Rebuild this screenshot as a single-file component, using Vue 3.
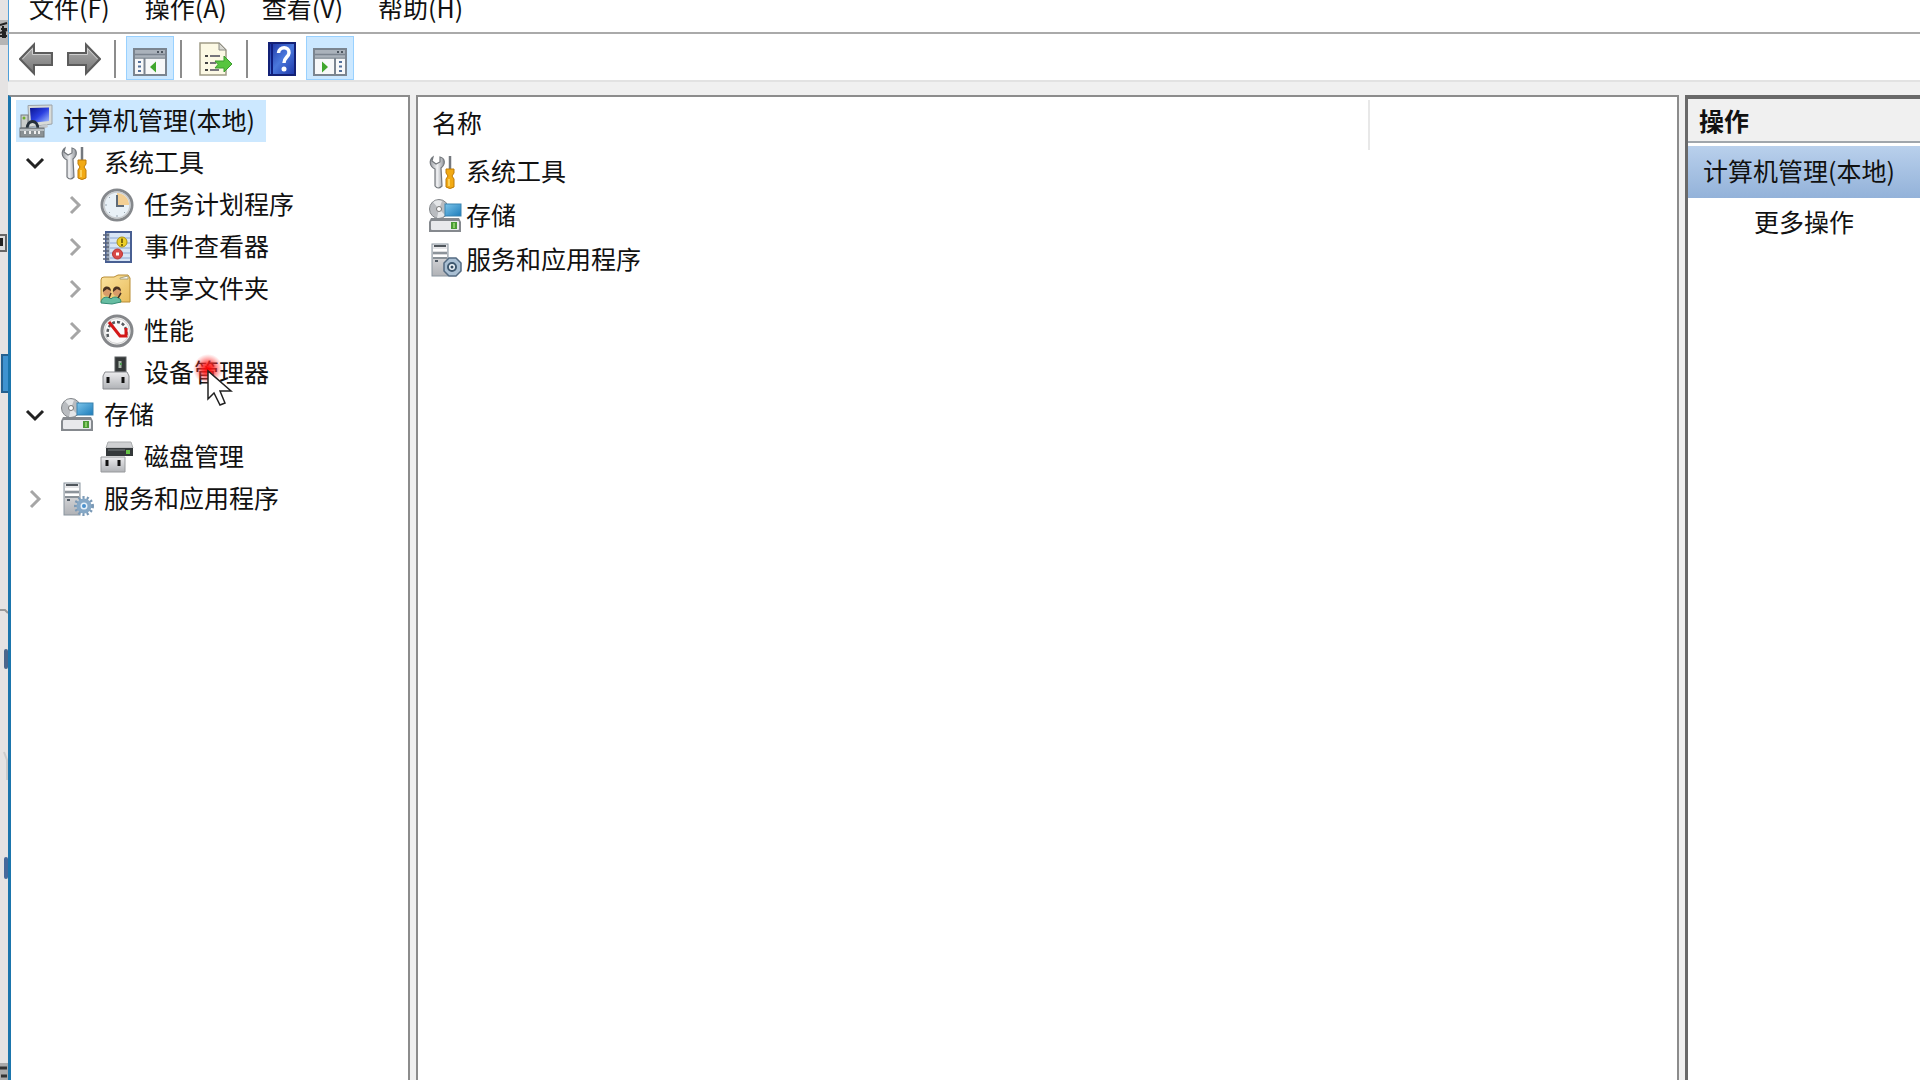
<script setup>
import { ref } from 'vue'

const menus = ['文件(F)', '操作(A)', '查看(V)', '帮助(H)']

const tree = [
  { label: '计算机管理(本地)', icon: 'computer', level: 0, state: 'none' },
  { label: '系统工具', icon: 'tools', level: 1, state: 'open' },
  { label: '任务计划程序', icon: 'clock', level: 2, state: 'closed' },
  { label: '事件查看器', icon: 'events', level: 2, state: 'closed' },
  { label: '共享文件夹', icon: 'shared', level: 2, state: 'closed' },
  { label: '性能', icon: 'gauge', level: 2, state: 'closed' },
  { label: '设备管理器', icon: 'device', level: 2, state: 'leaf', pointer: true },
  { label: '存储', icon: 'storage', level: 1, state: 'open' },
  { label: '磁盘管理', icon: 'disk', level: 2, state: 'leaf' },
  { label: '服务和应用程序', icon: 'services', level: 1, state: 'closed' }
]

const items = [
  { label: '系统工具', icon: 'tools' },
  { label: '存储', icon: 'storage' },
  { label: '服务和应用程序', icon: 'services-disc' }
]

const selected = ref(tree[0].label)
</script>

<template>
  <div class="desktop">
    <svg class="defs" aria-hidden="true">
      <defs>
        <linearGradient id="g-arrow" x1="0" y1="0" x2="0" y2="1">
          <stop offset="0" stop-color="#b0b0b0" />
          <stop offset="1" stop-color="#757575" />
        </linearGradient>
        <linearGradient id="g-help" x1="0" y1="0" x2="1" y2="1">
          <stop offset="0" stop-color="#1a2fa0" />
          <stop offset="0.5" stop-color="#4a78dc" />
          <stop offset="1" stop-color="#1c36a8" />
        </linearGradient>
        <linearGradient id="g-screen" x1="0" y1="0" x2="1" y2="1">
          <stop offset="0" stop-color="#0a1490" />
          <stop offset="0.5" stop-color="#2a3fe0" />
          <stop offset="1" stop-color="#a8c4ff" />
        </linearGradient>
        <linearGradient id="g-metal" x1="0" y1="0" x2="1" y2="0">
          <stop offset="0" stop-color="#9a9ea4" />
          <stop offset="0.5" stop-color="#f0f1f3" />
          <stop offset="1" stop-color="#8e9298" />
        </linearGradient>
        <linearGradient id="g-blue" x1="0" y1="0" x2="1" y2="1">
          <stop offset="0" stop-color="#7cc4ea" />
          <stop offset="1" stop-color="#1c7cba" />
        </linearGradient>
        <linearGradient id="g-box" x1="0" y1="0" x2="0" y2="1">
          <stop offset="0" stop-color="#ececee" />
          <stop offset="1" stop-color="#b0b2b6" />
        </linearGradient>
        <linearGradient id="g-folder" x1="0" y1="0" x2="1" y2="1">
          <stop offset="0" stop-color="#fbe3a0" />
          <stop offset="1" stop-color="#e9bd5c" />
        </linearGradient>
        <radialGradient id="g-dot">
          <stop offset="0" stop-color="#f00" />
          <stop offset="0.4" stop-color="#f22" stop-opacity="0.8" />
          <stop offset="1" stop-color="#f55" stop-opacity="0" />
        </radialGradient>

        <symbol id="back" viewBox="0 0 34 34">
          <path d="M1 17 15 2.500V11H33V23H15V31.500Z" fill="url(#g-arrow)" stroke="#5c5c5c" stroke-width="2" />
          <path d="M3.500 17 13.500 6.500V12.500H31.500" fill="none" stroke="#cfcfcf" />
        </symbol>
        <symbol id="forward" viewBox="0 0 34 34">
          <path d="M33 17 19 2.500V11H1V23H19V31.500Z" fill="url(#g-arrow)" stroke="#5c5c5c" stroke-width="2" />
          <path d="M30.500 17 20.500 6.500V12.500H2.500" fill="none" stroke="#cfcfcf" />
        </symbol>
        <symbol id="tree-pane" viewBox="0 0 34 28">
          <rect x="1" y="1" width="32" height="26" fill="#f7f8f9" stroke="#7b8590" stroke-width="2" />
          <path d="M2 2H32V9H2Z" fill="#aab2bb" />
          <path d="M2 6.500H32M2 10H32" stroke="#7b8590" stroke-width="1.500" />
          <path d="M24 4H26M28 4H30" stroke="#4d5660" stroke-width="2" />
          <path d="M11.500 10V27" stroke="#7b8590" stroke-width="2" />
          <path d="M5 14H8M5 18.500H8M5 23H8" stroke="#53719c" stroke-width="2" />
          <path d="M17 19 23 13.500V24.500Z" fill="#3fa62c" />
        </symbol>
        <symbol id="action-pane" viewBox="0 0 34 28">
          <rect x="1" y="1" width="32" height="26" fill="#f7f8f9" stroke="#7b8590" stroke-width="2" />
          <path d="M2 2H32V9H2Z" fill="#aab2bb" />
          <path d="M2 6.500H32M2 10H32" stroke="#7b8590" stroke-width="1.500" />
          <path d="M24 4H26M28 4H30" stroke="#4d5660" stroke-width="2" />
          <path d="M22 10V27" stroke="#7b8590" stroke-width="2" />
          <path d="M26 14H29M26 18.500H29M26 23H29" stroke="#53719c" stroke-width="2" />
          <path d="M15 19 9 13.500V24.500Z" fill="#3fa62c" />
        </symbol>
        <symbol id="export" viewBox="0 0 34 34">
          <path d="M1 1H20L27 8V33H1Z" fill="#fcf9e4" stroke="#a09c86" stroke-width="1.500" />
          <path d="M20 1V8H27Z" fill="#d9d9d2" stroke="#8d8d86" />
          <path d="M6 14H9M6 21H9M6 28H9" stroke="#444" stroke-width="2" />
          <path d="M11 14H21M11 21H17M11 28H20" stroke="#77757c" stroke-width="2" />
          <path d="M16 19H25V14L33 22 25 30V26H16L19 22.500Z" fill="#57c53f" stroke="#3d9c30" />
        </symbol>
        <symbol id="help" viewBox="0 0 28 34">
          <rect x="1" y="1" width="26" height="32" fill="url(#g-help)" stroke="#132176" stroke-width="2" />
          <path d="M4 2V32" stroke="#0f1e80" stroke-width="2" />
          <path d="M10.500 11C11 4 21.500 4 21 11 20.800 15 16 15.500 16 21" fill="none" stroke="#fff" stroke-width="3.500" />
          <circle cx="16" cy="27" r="2.500" fill="#fff" />
        </symbol>

        <symbol id="computer" viewBox="0 0 34 34">
          <path d="M9 1.500 33 1V20L10 23Z" fill="#d8dbd8" stroke="#9da3a8" />
          <path d="M11 4 30 3.500V17L12 19Z" fill="url(#g-screen)" />
          <rect x="2" y="11" width="7" height="13" fill="#c9ccca" stroke="#777c80" />
          <circle cx="5" cy="14" r="1.500" fill="#6fae2c" />
          <path d="M8 25C8 15 19 15 19 25" fill="none" stroke="#25303a" stroke-width="3" />
          <path d="M20 22 28 20 29 23 22 26Z" fill="#c4c8cc" />
          <rect x="1" y="24" width="24" height="9" fill="#8a9194" stroke="#6c7377" />
          <path d="M1 26H25" stroke="#b8bec1" stroke-width="2" />
          <path d="M6 27V30M11 27V30M16 27V30M20 27V30" stroke="#eee" stroke-width="2" />
        </symbol>
        <symbol id="tools" viewBox="0 0 34 34">
          <path d="M5 2 4 6 8 9 12 7 12 2C17 3 18 9 13 13L14 31Q10 35 7 31L7 14C1 11 1 5 5 2Z" fill="url(#g-metal)" stroke="#73777c" stroke-width="1.200" />
          <path d="M22 1V15" stroke="#74787e" stroke-width="2.500" />
          <path d="M18 14H26V18L24 21 26 24V32Q22 35 18 32V24L20 21 18 18Z" fill="#f2aa14" stroke="#bd7a08" />
          <path d="M21 24V31" stroke="#ffdc70" stroke-width="1.500" />
        </symbol>
        <symbol id="clock" viewBox="0 0 34 34">
          <circle cx="17" cy="17" r="15" fill="#e9f1f7" stroke="#85888c" stroke-width="3" />
          <circle cx="17" cy="17" r="13" fill="none" stroke="#c9cccf" stroke-width="1.500" />
          <path d="M17 17V5A12 12 0 0 1 29 17Z" fill="#f3cf94" />
          <path d="M17 7V18H24" fill="none" stroke="#5f6b78" stroke-width="2" />
          <path d="M5 17H7M17 27V29M9 9 10 10M9 25 10 24M25 25 24 24" stroke="#9aa7b2" />
        </symbol>
        <symbol id="events" viewBox="0 0 34 34">
          <rect x="6" y="2" width="25" height="30" fill="#d7e5f6" stroke="#485f92" stroke-width="2" />
          <path d="M10 8H30M10 13H30M10 18H30M10 23H30M10 28H30" stroke="#8ba6d2" />
          <path d="M8 3V31" stroke="#9aa5b4" stroke-width="3" />
          <path d="M3 5H9M3 9H9M3 13H9M3 17H9M3 21H9M3 25H9M3 29H9" stroke="#596375" stroke-width="1.500" />
          <circle cx="22" cy="12" r="5" fill="#edcf2a" stroke="#ac9212" />
          <path d="M22 8.500V13M22 14V16" stroke="#5b4a00" stroke-width="1.500" />
          <circle cx="17.500" cy="24" r="5" fill="#d84a4a" stroke="#b93434" />
          <rect x="16" y="22.500" width="3" height="3" fill="#fff" />
        </symbol>
        <symbol id="shared" viewBox="0 0 34 34">
          <path d="M1 8Q1 5 4 5H14L18 3H28L30 6V30H1Z" fill="url(#g-folder)" stroke="#b98d35" />
          <path d="M20 6 28 4V7H20Z" fill="#fff" stroke="#aaa17a" />
          <path d="M1 31C1 24 9 24 11 27 13 24 21 24 21 30L12 32Z" fill="#66bda2" stroke="#348c75" />
          <circle cx="7" cy="20" r="4" fill="#d89b69" />
          <circle cx="17" cy="20" r="4" fill="#d89b69" />
          <path d="M3 20C2 13 11 13 11 19L7 17ZM13 20C12 13 21 13 21 19L17 17Z" fill="#493322" />
          <path d="M11 21 9 26M21 21 18 26" stroke="#493322" stroke-width="1.500" />
        </symbol>
        <symbol id="gauge" viewBox="0 0 34 34">
          <circle cx="17" cy="17" r="15" fill="#fafafa" stroke="#85878a" stroke-width="3" />
          <circle cx="17" cy="17" r="12.500" fill="none" stroke="#d2d2d2" />
          <path d="M8 23C6 14 11 8 17 8S28 14 26 23" fill="none" stroke="#555a5e" stroke-width="2.500" stroke-dasharray="3 2" />
          <path d="M9 8 20 22H26V14" fill="none" stroke="#d41616" stroke-width="3" />
        </symbol>
        <symbol id="device" viewBox="0 0 34 34">
          <rect x="15" y="1" width="11" height="15" fill="#343838" stroke="#5b5f60" />
          <path d="M20 5V12" stroke="#a9b6aa" stroke-width="3" />
          <rect x="20" y="7" width="2" height="2" fill="#4e9b51" />
          <path d="M5 16H27L29 20V33H3V20Z" fill="url(#g-box)" stroke="#8a8c90" />
          <path d="M8 21V27M23 21V27" stroke="#111" stroke-width="3" />
        </symbol>
        <symbol id="storage" viewBox="0 0 34 34">
          <circle cx="11" cy="10" r="9.500" fill="#b9bcc0" stroke="#808488" />
          <path d="M11 10 5 3A9 9 0 0 1 14 2ZM11 10 17 16A9 9 0 0 1 9 19Z" fill="#e4e6e8" />
          <circle cx="11" cy="10" r="2.500" fill="#fff" stroke="#777" />
          <rect x="17" y="5" width="16" height="12" fill="url(#g-blue)" stroke="#3b83b0" />
          <path d="M3 19H31L33 23V33H1V23Z" fill="#85898e" />
          <rect x="3" y="22" width="28" height="9" rx="1" fill="#e8e9ec" />
          <rect x="23" y="23" width="6" height="7" fill="#4a9a36" />
          <path d="M26 24V29" stroke="#9bdc74" stroke-width="1.500" />
        </symbol>
        <symbol id="disk" viewBox="0 0 34 34">
          <path d="M8 2H31L33 8H6Z" fill="#cfd0d2" stroke="#aaacae" />
          <rect x="6" y="8" width="27" height="8" fill="#34383a" />
          <path d="M8 10H25" stroke="#777c7e" />
          <rect x="26" y="10" width="4" height="4" fill="#66c347" />
          <path d="M1 17H25V32H1Z" fill="url(#g-box)" stroke="#989a9d" />
          <path d="M7 20V26M19 20V26" stroke="#111" stroke-width="3" />
        </symbol>
        <symbol id="tower" viewBox="0 0 34 34">
          <rect x="4" y="1" width="16" height="32" fill="url(#g-box)" stroke="#8a959f" />
          <path d="M6 3H18" stroke="#50565c" stroke-width="2" />
          <path d="M5 7H19M5 13H19" stroke="#fff" stroke-width="2" />
          <path d="M5 10H19M5 15H19" stroke="#737c84" stroke-width="1.500" />
          <path d="M7 18H10" stroke="#4f5963" stroke-width="2" />
        </symbol>
        <symbol id="services" viewBox="0 0 34 34">
          <use href="#tower" width="34" height="34" />
          <circle cx="24" cy="24" r="8" fill="none" stroke="#7a99b6" stroke-width="4" stroke-dasharray="2 2" />
          <circle cx="24" cy="24" r="5.500" fill="#e6f1fa" stroke="#86a8c6" stroke-width="4" />
          <circle cx="24" cy="24" r="2" fill="#4a90cc" />
        </symbol>
        <symbol id="services-disc" viewBox="0 0 34 34">
          <use href="#tower" width="34" height="34" />
          <path d="M21 15H28L33 20V28L28 33H21L16 28V20Z" fill="#a9bfd3" stroke="#546b82" stroke-width="1.500" />
          <circle cx="24" cy="24" r="4" fill="#eff5fa" stroke="#3f5970" stroke-width="2" />
          <circle cx="24" cy="24" r="1.500" fill="#334b61" />
        </symbol>
      </defs>
    </svg>

    <div class="behind" aria-hidden="true">
      <svg width="8" height="1080">
        <path d="M0 20H8V45H0Z" fill="#b5b5b5" />
        <path d="M0 25 7 23M1 29H7M0 33 7 30M3 26V38M0 36H7M5 32V38" stroke="#222" stroke-width="2" />
        <path d="M0 235H6V251H0" fill="#ddd" stroke="#666" stroke-width="2" />
        <path d="M0 238H3V246H0Z" fill="#222" />
        <rect x="2" y="355" width="7" height="37" fill="#3f93d0" stroke="#25608f" stroke-width="2" />
        <path d="M0 610H5L8 613" fill="none" stroke="#999" stroke-width="2" />
        <rect x="4" y="649" width="4" height="20" rx="2" fill="#4b668c" />
        <path d="M4 752 7 760V780" fill="none" stroke="#ccc" stroke-width="2" />
        <rect x="4" y="857" width="4" height="22" rx="2" fill="#46699b" />
        <path d="M0 1063H8V1080H0Z" fill="#aaa" />
        <path d="M0 1068H7M1 1076H7" stroke="#333" stroke-width="3" />
      </svg>
    </div>

    <main class="window">
      <nav class="menubar">
        <button v-for="m in menus" :key="m" type="button">{{ m }}</button>
      </nav>

      <div class="toolbar">
        <button type="button" class="tool" aria-label="后退"><svg class="icon"><use href="#back" /></svg></button>
        <button type="button" class="tool" aria-label="前进"><svg class="icon"><use href="#forward" /></svg></button>
        <span class="rule"></span>
        <button type="button" class="tool toggled" aria-label="显示/隐藏控制台树"><svg class="icon pane-icon"><use href="#tree-pane" /></svg></button>
        <span class="rule"></span>
        <button type="button" class="tool" aria-label="导出列表"><svg class="icon"><use href="#export" /></svg></button>
        <span class="rule"></span>
        <button type="button" class="tool" aria-label="帮助"><svg class="icon"><use href="#help" /></svg></button>
        <button type="button" class="tool toggled" aria-label="显示/隐藏操作窗格"><svg class="icon pane-icon"><use href="#action-pane" /></svg></button>
      </div>

      <div class="panes">
        <ul class="tree">
          <li v-for="n in tree" :key="n.label" :class="['node', 'level-' + n.level]">
            <svg v-if="n.level" :class="['chevron', n.state]" viewBox="0 0 20 20" aria-hidden="true">
              <path v-if="n.state === 'open'" d="M2 6 10 14 18 6" />
              <path v-if="n.state === 'closed'" d="M6 2 14 10 6 18" />
            </svg>
            <button type="button" :class="{ selected: selected === n.label }" @click="selected = n.label">
              <svg class="icon"><use :href="'#' + n.icon" /></svg>
              <span class="label">{{ n.label }}</span>
            </button>
            <svg v-if="n.pointer" class="pointer" viewBox="0 0 44 56" aria-hidden="true">
              <circle cx="16" cy="16" r="15" fill="url(#g-dot)" />
              <path d="M16 18V46L22 40 28 52 33 50 28 38H39Z" fill="#fff" stroke="#222" stroke-width="1.500" />
            </svg>
          </li>
        </ul>

        <section class="list">
          <div class="columns"><span class="column">名称</span></div>
          <ul>
            <li v-for="i in items" :key="i.label">
              <button type="button">
                <svg class="icon"><use :href="'#' + i.icon" /></svg>
                <span class="label">{{ i.label }}</span>
              </button>
            </li>
          </ul>
        </section>

        <aside class="actions">
          <h2>操作</h2>
          <h3>计算机管理(本地)</h3>
          <button type="button">更多操作</button>
        </aside>
      </div>
    </main>
  </div>
</template>

<style>
body {
  margin: 0;
  overflow: hidden;
}
</style>

<style scoped>
.desktop {
  display: flex;
  height: 100vh;
  overflow: hidden;
  background: #e5e3e3;
  color: #111;
  font: 25px/42px "Noto Sans CJK SC", "Noto Sans", sans-serif;
}

.defs {
  position: absolute;
  width: 0;
  height: 0;
}

.behind {
  flex: none;
  width: 8px;
  overflow: hidden;
}

button {
  padding: 0;
  border: 0;
  background: none;
  color: inherit;
  font: inherit;
  white-space: nowrap;
}

ul {
  margin: 0;
  padding: 0;
  list-style: none;
}

.icon {
  display: block;
  flex: none;
  width: 34px;
  height: 34px;
}

.label {
  padding-bottom: 5px;
  line-height: 36px;
}

.window {
  display: flex;
  flex: 1;
  flex-direction: column;
  min-width: 0;
  background: #f0f0f0;
}

.menubar {
  display: flex;
  gap: 35px;
  padding: 0 20px 18px;
  border-left: 1px solid #4f9fd8;
  border-bottom: 2px solid #aaa;
  background: #fff;
  line-height: 14px;
}

.toolbar {
  display: flex;
  align-items: flex-end;
  height: 46px;
  padding-left: 3px;
  border-left: 1px solid #4f9fd8;
  border-bottom: 2px solid #e2e2e2;
  background: #fff;
}

.tool {
  display: flex;
  align-items: center;
  justify-content: center;
  box-sizing: border-box;
  width: 48px;
  height: 44px;
  padding-top: 2px;
}

.toggled {
  border: 1px solid #99d1ff;
  background: #cce8ff;
}

.pane-icon {
  height: 28px;
  margin-top: 5px;
}

.rule {
  width: 2px;
  height: 38px;
  margin: 0 10px 2px 6px;
  background: #8c8c8c;
}

.panes {
  display: flex;
  flex: 1;
  gap: 6px;
  min-height: 0;
  padding-top: 13px;
}

.tree {
  box-sizing: border-box;
  flex: none;
  width: 402px;
  padding: 3px 0 0 5px;
  border: 2px solid #8c8c8c;
  border-left: 3px solid #1b75ac;
  border-bottom: 0;
  background: #fff;
}

.node {
  position: relative;
  display: flex;
  align-items: center;
  height: 42px;
}

.node button {
  display: flex;
  align-items: center;
  gap: 10px;
  height: 42px;
  padding: 0 11px 0 3px;
}

.node .selected {
  background: #cce8ff;
}

.level-1 {
  padding-left: 9px;
}

.level-2 {
  padding-left: 49px;
}

.chevron {
  flex: none;
  width: 20px;
  height: 20px;
  margin-right: 12px;
  fill: none;
  stroke: #a6a6a6;
  stroke-width: 3;
}

.chevron.open {
  stroke: #222;
}

.pointer {
  position: absolute;
  left: 176px;
  top: 1px;
  z-index: 1;
  width: 44px;
  height: 56px;
}

.list {
  flex: 1;
  min-width: 0;
  border: 2px solid #8c8c8c;
  border-bottom: 0;
  background: #fff;
}

.columns {
  padding-top: 3px;
  line-height: 44px;
}

.column {
  display: block;
  box-sizing: border-box;
  width: 952px;
  max-width: 100%;
  height: 50px;
  padding-left: 14px;
  border-right: 2px solid #e8e8e8;
}

.list li button {
  display: flex;
  align-items: center;
  gap: 4px;
  height: 44px;
  padding-left: 10px;
}

.actions {
  flex: none;
  box-sizing: border-box;
  width: 235px;
  border-top: 4px solid #696969;
  border-left: 3px solid #696969;
  background: #fff;
}

.actions h2,
.actions h3 {
  margin: 0;
  font-size: 25px;
}

.actions h2 {
  padding-left: 11px;
  border-bottom: 2px solid #a0a6ac;
  background: #f0f0f0;
}

.actions h3 {
  margin-top: 3px;
  padding: 0 0 4px 15px;
  background: linear-gradient(#b9d0ec, #93b2d9);
  font-weight: 400;
  line-height: 48px;
}

.actions button {
  display: block;
  padding-left: 66px;
  line-height: 46px;
}
</style>
